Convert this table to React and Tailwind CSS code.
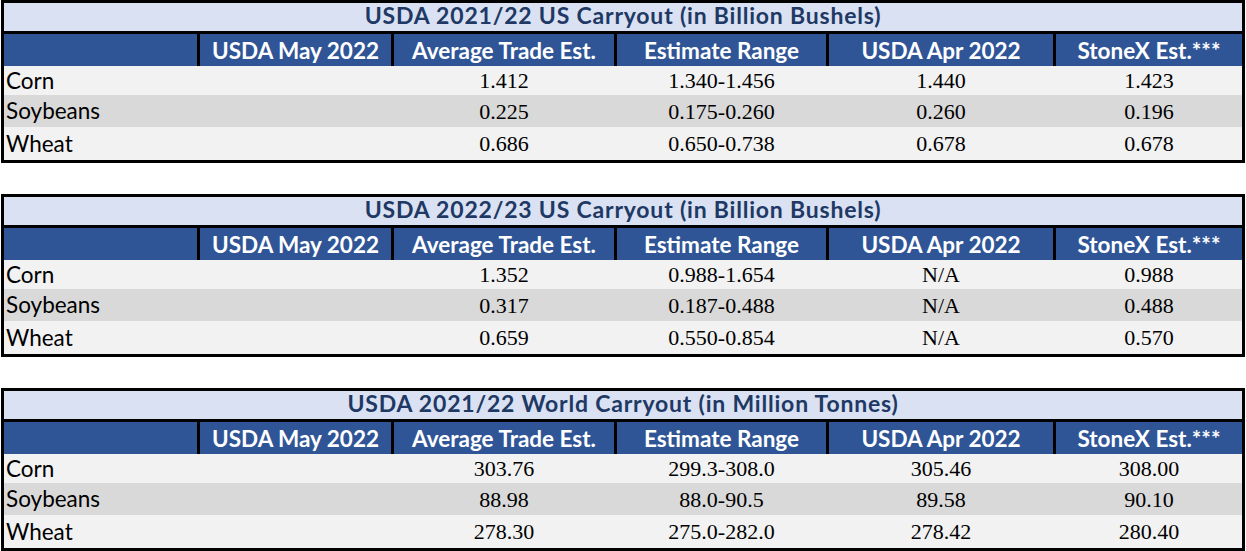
import React from "react";

const headers = [
  "",
  "USDA May 2022",
  "Average Trade Est.",
  "Estimate Range",
  "USDA Apr 2022",
  "StoneX Est.***",
];

const tables = [
  {
    title: "USDA 2021/22 US Carryout (in Billion Bushels)",
    rows: [
      ["Corn", "", "1.412", "1.340-1.456", "1.440", "1.423"],
      ["Soybeans", "", "0.225", "0.175-0.260", "0.260", "0.196"],
      ["Wheat", "", "0.686", "0.650-0.738", "0.678", "0.678"],
    ],
  },
  {
    title: "USDA 2022/23 US Carryout (in Billion Bushels)",
    rows: [
      ["Corn", "", "1.352", "0.988-1.654", "N/A", "0.988"],
      ["Soybeans", "", "0.317", "0.187-0.488", "N/A", "0.488"],
      ["Wheat", "", "0.659", "0.550-0.854", "N/A", "0.570"],
    ],
  },
  {
    title: "USDA 2021/22 World Carryout (in Million Tonnes)",
    rows: [
      ["Corn", "", "303.76", "299.3-308.0", "305.46", "308.00"],
      ["Soybeans", "", "88.98", "88.0-90.5", "89.58", "90.10"],
      ["Wheat", "", "278.30", "275.0-282.0", "278.42", "280.40"],
    ],
  },
];

const cols = "grid grid-cols-[193px_191px_220px_209px_224px_186px] gap-x-[3px]";
const rowStyles = [
  "h-[29px] bg-[#f2f2f2]",
  "h-[32px] bg-[#d9d9d9]",
  "h-[33px] bg-[#f2f2f2]",
];
const label = { fontFamily: "Lato, 'Open Sans', sans-serif" };

const CarryoutTable = ({ title, rows }) => (
  <div className="flex w-[1244px] flex-col gap-[3px] border-[3px] border-black bg-black">
    <div
      className="flex h-[28px] items-center justify-center bg-[#d9e1f2] pb-[3px] text-[23px] font-bold tracking-[0.8px] text-[#203864]"
      style={label}
    >
      {title}
    </div>
    <div className={`${cols} h-[29px]`}>
      {headers.map((h, i) => (
        <div
          key={i}
          className="flex items-center justify-center bg-[#2f5597] text-[22.5px] font-bold text-white"
          style={label}
        >
          {h}
        </div>
      ))}
    </div>
    <div>
      {rows.map((r, ri) => (
        <div key={ri} className={`${cols} ${rowStyles[ri]}`}>
          {r.map((c, ci) =>
            ci === 0 ? (
              <div key={ci} className={`flex items-center pl-[2px] text-[22.5px] text-black ${rowStyles[ri]}`} style={label}>
                {c}
              </div>
            ) : (
              <div
                key={ci}
                className={`flex items-center justify-center text-[22px] text-black ${rowStyles[ri]}`}
                style={{ fontFamily: "'Liberation Serif', 'Times New Roman', serif" }}
              >
                {c}
              </div>
            )
          )}
        </div>
      ))}
    </div>
  </div>
);

export default function App() {
  return (
    <div className="flex w-[1246px] flex-col gap-[31px] bg-white pl-px">
      {tables.map((t) => (
        <CarryoutTable key={t.title} {...t} />
      ))}
    </div>
  );
}
